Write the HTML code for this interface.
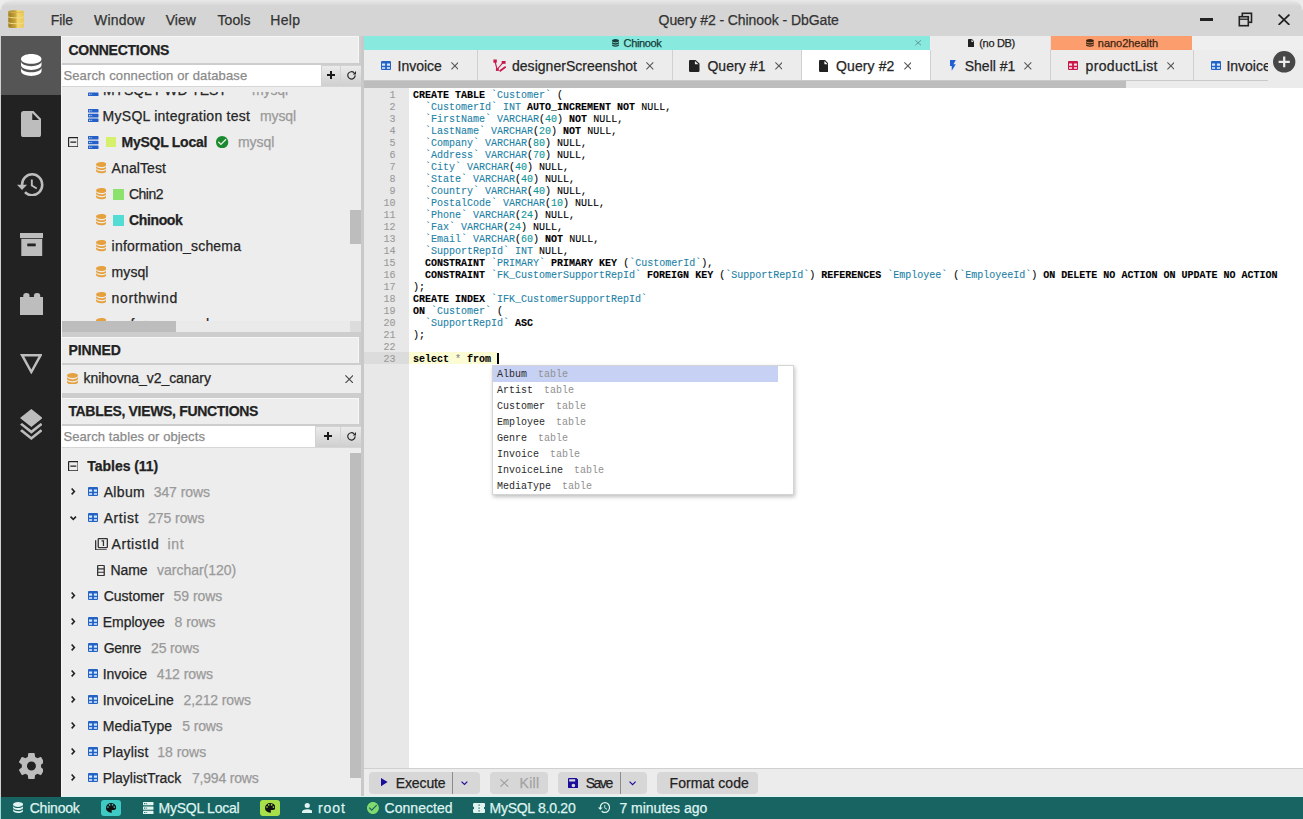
<!DOCTYPE html>
<html><head><meta charset="utf-8"><style>
html,body{margin:0;padding:0;}
body{width:1303px;height:819px;position:relative;overflow:hidden;background:#ececec;font-family:"Liberation Sans",sans-serif;}
.t{position:absolute;white-space:pre;-webkit-text-stroke:0.25px currentColor;}
.t.m{-webkit-text-stroke:0.1px currentColor;}
.r{position:absolute;}
.i{position:absolute;display:block;}
b{font-weight:bold;}
.id{color:#1d82a6;}
.n{color:#0a9696;}
.ty{color:#1d82a6;}
.op{color:#888;}
</style></head><body>
<div class="r" style="left:0px;top:0px;width:1303px;height:36px;background:#d5d5d5;"></div>
<div class="r" style="left:0px;top:0px;width:1303px;height:6px;background:linear-gradient(#e9e9e9,#d5d5d5);"></div>
<div class="r" style="left:0;top:0;width:10px;height:10px;background:radial-gradient(circle at 100% 100%, rgba(213,213,213,0) 0, rgba(213,213,213,0) 8px, #ececec 10px);"></div>
<div class="r" style="left:1293px;top:0;width:10px;height:10px;background:radial-gradient(circle at 0% 100%, rgba(213,213,213,0) 0, rgba(213,213,213,0) 8px, #ececec 10px);"></div>
<svg class="i" style="left:8px;top:9.5px" width="16.2" height="18.5" viewBox="0 0 16.2 18.5">
<defs><linearGradient id="lg" x1="0" x2="1"><stop offset="0" stop-color="#9c7d22"/><stop offset="0.45" stop-color="#c9a43a"/><stop offset="0.6" stop-color="#f3d66e"/><stop offset="1" stop-color="#e8c85a"/></linearGradient></defs>
<path d="M0.3,1.5 C0.3,-0.3 15.9,-0.3 15.9,1.5 V16.8 C15.9,18.9 0.3,18.9 0.3,16.8 Z" fill="url(#lg)"/>
<path d="M0.3,1.6 C0.3,2.8 15.9,2.8 15.9,1.6" stroke="#d9b850" stroke-width="0.8" fill="none"/>
<path d="M0.3,6.8 C0.3,8.2 15.9,8.2 15.9,6.8" stroke="#f2dc8a" stroke-width="1" fill="none"/>
<path d="M0.3,12.6 C0.3,14 15.9,14 15.9,12.6" stroke="#f2dc8a" stroke-width="1" fill="none"/>
</svg>
<div class="t" style="left:50.75px;top:13.15px;font-size:14px;line-height:14px;color:#333;letter-spacing:-0.107px;">File</div>
<div class="t" style="left:94.10px;top:13.15px;font-size:14px;line-height:14px;color:#333;letter-spacing:0.163px;">Window</div>
<div class="t" style="left:165.70px;top:13.15px;font-size:14px;line-height:14px;color:#333;letter-spacing:0.006px;">View</div>
<div class="t" style="left:217.40px;top:13.15px;font-size:14px;line-height:14px;color:#333;letter-spacing:0.104px;">Tools</div>
<div class="t" style="left:270.30px;top:13.15px;font-size:14px;line-height:14px;color:#333;letter-spacing:0.331px;">Help</div>
<div class="t" style="left:658.60px;top:13.15px;font-size:14px;line-height:14px;color:#333;letter-spacing:-0.073px;">Query #2 - Chinook - DbGate</div>
<div class="r" style="left:1200px;top:17.5px;width:13px;height:3.5px;background:#222;"></div>
<svg class="i" style="left:1238px;top:12px" width="15" height="15" viewBox="0 0 15 15">
<rect x="4.3" y="1.3" width="9.2" height="9" fill="none" stroke="#222" stroke-width="1.6"/>
<rect x="1.3" y="4.7" width="9" height="9" fill="#d5d5d5" stroke="#222" stroke-width="1.6"/>
<line x1="1" y1="7.2" x2="10.5" y2="7.2" stroke="#222" stroke-width="1.3"/>
</svg>
<svg class="i" style="left:1277.5px;top:13.5px" width="12.00" height="11.50" viewBox="0 0 10 10" preserveAspectRatio="none"><path d="M0.5,0.5L9.5,9.5M9.5,0.5L0.5,9.5" stroke="#222" stroke-width="1.5" fill="none"/></svg>
<div class="r" style="left:0px;top:36px;width:1px;height:761px;background:#d0d0d0;"></div>
<div class="r" style="left:1px;top:36px;width:60px;height:761px;background:#222222;"></div>
<div class="r" style="left:1px;top:36px;width:60px;height:59px;background:#555555;"></div>
<svg class="i" style="left:21px;top:54px;" width="20.50" height="22.00" viewBox="4 3 16 18" preserveAspectRatio="none"><path d="M12,3C7.58,3 4,4.79 4,7C4,9.21 7.58,11 12,11C16.42,11 20,9.21 20,7C20,4.79 16.42,3 12,3M4,9V12C4,14.21 7.58,16 12,16C16.42,16 20,14.21 20,12V9C20,11.21 16.42,13 12,13C7.58,13 4,11.21 4,9M4,14V17C4,19.21 7.58,21 12,21C16.42,21 20,19.21 20,17V14C20,16.21 16.42,18 12,18C7.58,18 4,16.21 4,14Z" fill="#ffffff"/></svg>
<svg class="i" style="left:21px;top:111px;" width="20.00" height="26.00" viewBox="4 2 16 20" preserveAspectRatio="none"><path d="M13,9V3.5L18.5,9M6,2C4.89,2 4,2.89 4,4V20A2,2 0 0,0 6,22H18A2,2 0 0,0 20,20V8L14,2H6Z" fill="#bdbdbd"/></svg>
<svg class="i" style="left:17px;top:172.5px;" width="26.50" height="23.50" viewBox="1 3 21 18" preserveAspectRatio="none"><path d="M13.5,8H12V13L16.28,15.54L17,14.33L13.5,12.25V8M13,3A9,9 0 0,0 4,12H1L4.96,16.03L9,12H6A7,7 0 0,1 13,5A7,7 0 0,1 20,12A7,7 0 0,1 13,19C11.07,19 9.32,18.21 8.06,16.94L6.64,18.36C8.27,20 10.5,21 13,21A9,9 0 0,0 22,12A9,9 0 0,0 13,3" fill="#bdbdbd"/></svg>
<svg class="i" style="left:19.5px;top:232.5px" width="23.5" height="23.5" viewBox="0 0 23.5 23.5">
<rect x="0" y="0" width="23.5" height="5.3" fill="#bdbdbd"/>
<rect x="1.3" y="5.3" width="20.9" height="18.2" fill="#bdbdbd"/>
<rect x="7.3" y="10.5" width="8.4" height="2.8" fill="#222"/>
<rect x="0" y="5.1" width="23.5" height="0.7" fill="#222"/>
</svg>
<svg class="i" style="left:19.5px;top:292.5px" width="23.5" height="22.5" viewBox="0 0 23.5 22.5">
<rect x="3.2" y="0" width="6.4" height="6" rx="3" fill="#bdbdbd"/>
<rect x="13.9" y="0" width="6.4" height="6" rx="3" fill="#bdbdbd"/>
<rect x="0" y="4" width="23.5" height="18.5" fill="#bdbdbd"/>
</svg>
<svg class="i" style="left:19.8px;top:353.5px;" width="22.70" height="20.50" viewBox="3 4 18 16" preserveAspectRatio="none"><path d="M6.38,6H17.63L12,16L6.38,6M3,4L12,20L21,4H3Z" fill="#bdbdbd"/></svg>
<svg class="i" style="left:19.8px;top:409px;" width="22.70" height="31.00" viewBox="3 0 18 24" preserveAspectRatio="none"><path d="M12 16.54L19.37 10.8L21 12.07L12 19.07L3 12.07L4.62 10.81L12 16.54M12 14L3 7L12 0L21 7L12 14M12 21.47L19.37 15.73L21 17L12 24L3 17L4.62 15.74L12 21.47Z" fill="#bdbdbd"/></svg>
<svg class="i" style="left:18.5px;top:753.3px;" width="24.90" height="26.10" viewBox="2.3 2 19.4 20" preserveAspectRatio="none"><path d="M12,15.5A3.5,3.5 0 0,1 8.5,12A3.5,3.5 0 0,1 12,8.5A3.5,3.5 0 0,1 15.5,12A3.5,3.5 0 0,1 12,15.5M19.43,12.97C19.47,12.65 19.5,12.33 19.5,12C19.5,11.67 19.47,11.34 19.43,11L21.54,9.37C21.73,9.22 21.78,8.95 21.66,8.73L19.66,5.27C19.54,5.05 19.27,4.96 19.05,5.05L16.56,6.05C16.04,5.66 15.5,5.32 14.87,5.07L14.5,2.42C14.46,2.18 14.25,2 14,2H10C9.75,2 9.54,2.18 9.5,2.42L9.13,5.07C8.5,5.32 7.96,5.66 7.44,6.05L4.95,5.05C4.73,4.96 4.46,5.05 4.34,5.27L2.34,8.73C2.21,8.95 2.27,9.22 2.46,9.37L4.57,11C4.53,11.34 4.5,11.67 4.5,12C4.5,12.33 4.53,12.65 4.57,12.97L2.46,14.63C2.27,14.78 2.21,15.05 2.34,15.27L4.34,18.73C4.46,18.95 4.73,19.03 4.95,18.95L7.44,17.94C7.96,18.34 8.5,18.68 9.13,18.93L9.5,21.58C9.54,21.82 9.75,22 10,22H14C14.25,22 14.46,21.82 14.5,21.58L14.87,18.93C15.5,18.67 16.04,18.34 16.56,17.94L19.05,18.95C19.27,19.03 19.54,18.95 19.66,18.73L21.66,15.27C21.78,15.05 21.73,14.78 21.54,14.63L19.43,12.97Z" fill="#bdbdbd"/></svg>
<div class="r" style="left:61px;top:36px;width:300px;height:761px;background:#ededed;"></div>
<div class="r" style="left:361px;top:36px;width:3px;height:761px;background:#c9c9c9;"></div>
<div class="r" style="left:61px;top:36px;width:300px;height:29px;background:#cdcdcd;"></div>
<div class="r" style="left:61px;top:36px;width:298px;height:26.5px;background:#ededed;border-top:1px solid #f7f7f7;border-right:1px solid #f7f7f7;border-left:1px solid #f7f7f7;box-sizing:border-box;"></div>
<div class="t" style="left:68.40px;top:43.15px;font-size:14px;line-height:14px;font-weight:bold;color:#222;letter-spacing:-0.251px;">CONNECTIONS</div>
<div class="r" style="left:61px;top:65px;width:260px;height:21px;background:#ffffff;"></div>
<div class="t" style="left:63.40px;top:68.99px;font-size:13px;line-height:13px;color:#8a8a8a;letter-spacing:0.138px;">Search connection or database</div>
<div class="r" style="left:321px;top:65px;width:40px;height:21px;background:#d2d2d2;"></div>
<div class="r" style="left:322px;top:66px;width:18px;height:20px;background:linear-gradient(#ebebeb,#cfcfcf);"></div>
<div class="r" style="left:341px;top:66px;width:19.5px;height:20px;background:linear-gradient(#ebebeb,#cfcfcf);"></div>
<div class="r" style="left:327.0px;top:74.2px;width:8.0px;height:2.0px;background:#1a1a1a;"></div>
<div class="r" style="left:330.0px;top:71.2px;width:2.0px;height:8.0px;background:#1a1a1a;"></div>
<svg class="i" style="left:346.5px;top:71.3px" width="9.5" height="8.5" viewBox="0 0 10 9"><path d="M8.6,4.6 A3.9,3.9 0 1 1 7.4,1.8" stroke="#2a2a2a" stroke-width="1.25" fill="none"/><path d="M9.6,0 V3.6 H6 Z" fill="#2a2a2a"/></svg>
<div class="r" style="left:61px;top:86px;width:300px;height:1px;background:#d6d6d6;"></div>
<div class="r" style="left:61px;top:92px;width:289px;height:229px;overflow:hidden;">
<svg class="i" style="left:27px;top:-9px;" width="10.50" height="13.00" viewBox="3 1 18 22" preserveAspectRatio="none"><path d="M4,1H20A1,1 0 0,1 21,2V6A1,1 0 0,1 20,7H4A1,1 0 0,1 3,6V2A1,1 0 0,1 4,1M4,9H20A1,1 0 0,1 21,10V14A1,1 0 0,1 20,15H4A1,1 0 0,1 3,14V10A1,1 0 0,1 4,9M4,17H20A1,1 0 0,1 21,18V22A1,1 0 0,1 20,23H4A1,1 0 0,1 3,22V18A1,1 0 0,1 4,17M9,5H10V3H9V5M9,13H10V11H9V13M9,21H10V19H9V21M5,3V5H7V3H5M5,11V13H7V11H5M5,19V21H7V19H5Z" fill="#2460c8"/></svg>
<div class="t" style="left:42.00px;top:-8.85px;font-size:14px;line-height:14px;color:#262626;letter-spacing:-0.053px;">MYSQL PWD TEST</div>
<div class="t" style="left:191.00px;top:-8.85px;font-size:14px;line-height:14px;color:#9a9a9a;letter-spacing:-0.112px;">mysql</div>
<svg class="i" style="left:27px;top:17px;" width="10.50" height="13.20" viewBox="3 1 18 22" preserveAspectRatio="none"><path d="M4,1H20A1,1 0 0,1 21,2V6A1,1 0 0,1 20,7H4A1,1 0 0,1 3,6V2A1,1 0 0,1 4,1M4,9H20A1,1 0 0,1 21,10V14A1,1 0 0,1 20,15H4A1,1 0 0,1 3,14V10A1,1 0 0,1 4,9M4,17H20A1,1 0 0,1 21,18V22A1,1 0 0,1 20,23H4A1,1 0 0,1 3,22V18A1,1 0 0,1 4,17M9,5H10V3H9V5M9,13H10V11H9V13M9,21H10V19H9V21M5,3V5H7V3H5M5,11V13H7V11H5M5,19V21H7V19H5Z" fill="#2460c8"/></svg>
<div class="t" style="left:41.60px;top:17.15px;font-size:14px;line-height:14px;color:#262626;letter-spacing:0.261px;">MySQL integration test</div>
<div class="t" style="left:199.00px;top:17.15px;font-size:14px;line-height:14px;color:#9a9a9a;letter-spacing:-0.137px;">mysql</div>
<svg class="i" style="left:6.799999999999997px;top:45px;" width="10.60" height="10.40" viewBox="3 3 18 18" preserveAspectRatio="none"><path d="M19,3H5C3.89,3 3,3.89 3,5V19A2,2 0 0,0 5,21H19A2,2 0 0,0 21,19V5C21,3.89 20.1,3 19,3M19,19H5V5H19V19M17,11H7V13H17V11Z" fill="#222"/></svg>
<svg class="i" style="left:27px;top:43.5px;" width="10.50" height="13.00" viewBox="3 1 18 22" preserveAspectRatio="none"><path d="M4,1H20A1,1 0 0,1 21,2V6A1,1 0 0,1 20,7H4A1,1 0 0,1 3,6V2A1,1 0 0,1 4,1M4,9H20A1,1 0 0,1 21,10V14A1,1 0 0,1 20,15H4A1,1 0 0,1 3,14V10A1,1 0 0,1 4,9M4,17H20A1,1 0 0,1 21,18V22A1,1 0 0,1 20,23H4A1,1 0 0,1 3,22V18A1,1 0 0,1 4,17M9,5H10V3H9V5M9,13H10V11H9V13M9,21H10V19H9V21M5,3V5H7V3H5M5,11V13H7V11H5M5,19V21H7V19H5Z" fill="#2460c8"/></svg>
<div class="r" style="left:44.6px;top:44.6px;width:10.699999999999996px;height:10.799999999999997px;background:#d6f06c;"></div>
<div class="t" style="left:60.50px;top:43.15px;font-size:14px;line-height:14px;font-weight:bold;color:#222;letter-spacing:-0.259px;">MySQL Local</div>
<svg class="i" style="left:155.4px;top:44px;" width="12.30" height="12.30" viewBox="2 2 20 20" preserveAspectRatio="none"><path d="M12 2C6.5 2 2 6.5 2 12S6.5 22 12 22 22 17.5 22 12 17.5 2 12 2M10 17L5 12L6.41 10.59L10 14.17L17.59 6.58L19 8L10 17Z" fill="#1b8a2e"/></svg>
<div class="t" style="left:177.00px;top:43.15px;font-size:14px;line-height:14px;color:#9a9a9a;letter-spacing:-0.062px;">mysql</div>
<svg class="i" style="left:34.7px;top:70.4px;" width="10.70" height="11.20" viewBox="4 3 16 18" preserveAspectRatio="none"><path d="M12,3C7.58,3 4,4.79 4,7C4,9.21 7.58,11 12,11C16.42,11 20,9.21 20,7C20,4.79 16.42,3 12,3M4,9V12C4,14.21 7.58,16 12,16C16.42,16 20,14.21 20,12V9C20,11.21 16.42,13 12,13C7.58,13 4,11.21 4,9M4,14V17C4,19.21 7.58,21 12,21C16.42,21 20,19.21 20,17V14C20,16.21 16.42,18 12,18C7.58,18 4,16.21 4,14Z" fill="#e5a13e"/></svg>
<div class="t" style="left:50.60px;top:69.15px;font-size:14px;line-height:14px;color:#262626;letter-spacing:0.099px;">AnalTest</div>
<svg class="i" style="left:34.7px;top:96.4px;" width="10.70" height="11.20" viewBox="4 3 16 18" preserveAspectRatio="none"><path d="M12,3C7.58,3 4,4.79 4,7C4,9.21 7.58,11 12,11C16.42,11 20,9.21 20,7C20,4.79 16.42,3 12,3M4,9V12C4,14.21 7.58,16 12,16C16.42,16 20,14.21 20,12V9C20,11.21 16.42,13 12,13C7.58,13 4,11.21 4,9M4,14V17C4,19.21 7.58,21 12,21C16.42,21 20,19.21 20,17V14C20,16.21 16.42,18 12,18C7.58,18 4,16.21 4,14Z" fill="#e5a13e"/></svg>
<div class="r" style="left:51.8px;top:96.5px;width:11.400000000000006px;height:11.0px;background:#8ce26c;"></div>
<div class="t" style="left:68.00px;top:95.15px;font-size:14px;line-height:14px;color:#262626;letter-spacing:-0.523px;">Chin2</div>
<svg class="i" style="left:34.7px;top:122.4px;" width="10.70" height="11.20" viewBox="4 3 16 18" preserveAspectRatio="none"><path d="M12,3C7.58,3 4,4.79 4,7C4,9.21 7.58,11 12,11C16.42,11 20,9.21 20,7C20,4.79 16.42,3 12,3M4,9V12C4,14.21 7.58,16 12,16C16.42,16 20,14.21 20,12V9C20,11.21 16.42,13 12,13C7.58,13 4,11.21 4,9M4,14V17C4,19.21 7.58,21 12,21C16.42,21 20,19.21 20,17V14C20,16.21 16.42,18 12,18C7.58,18 4,16.21 4,14Z" fill="#e5a13e"/></svg>
<div class="r" style="left:51.8px;top:122.5px;width:11.400000000000006px;height:11.0px;background:#52dcd3;"></div>
<div class="t" style="left:68.00px;top:121.15px;font-size:14px;line-height:14px;font-weight:bold;color:#222;letter-spacing:-0.368px;">Chinook</div>
<svg class="i" style="left:34.7px;top:148.4px;" width="10.70" height="11.20" viewBox="4 3 16 18" preserveAspectRatio="none"><path d="M12,3C7.58,3 4,4.79 4,7C4,9.21 7.58,11 12,11C16.42,11 20,9.21 20,7C20,4.79 16.42,3 12,3M4,9V12C4,14.21 7.58,16 12,16C16.42,16 20,14.21 20,12V9C20,11.21 16.42,13 12,13C7.58,13 4,11.21 4,9M4,14V17C4,19.21 7.58,21 12,21C16.42,21 20,19.21 20,17V14C20,16.21 16.42,18 12,18C7.58,18 4,16.21 4,14Z" fill="#e5a13e"/></svg>
<div class="t" style="left:50.60px;top:147.15px;font-size:14px;line-height:14px;color:#262626;letter-spacing:0.196px;">information_schema</div>
<svg class="i" style="left:34.7px;top:174.39999999999998px;" width="10.70" height="11.20" viewBox="4 3 16 18" preserveAspectRatio="none"><path d="M12,3C7.58,3 4,4.79 4,7C4,9.21 7.58,11 12,11C16.42,11 20,9.21 20,7C20,4.79 16.42,3 12,3M4,9V12C4,14.21 7.58,16 12,16C16.42,16 20,14.21 20,12V9C20,11.21 16.42,13 12,13C7.58,13 4,11.21 4,9M4,14V17C4,19.21 7.58,21 12,21C16.42,21 20,19.21 20,17V14C20,16.21 16.42,18 12,18C7.58,18 4,16.21 4,14Z" fill="#e5a13e"/></svg>
<div class="t" style="left:50.60px;top:173.15px;font-size:14px;line-height:14px;color:#262626;letter-spacing:0.063px;">mysql</div>
<svg class="i" style="left:34.7px;top:200.39999999999998px;" width="10.70" height="11.20" viewBox="4 3 16 18" preserveAspectRatio="none"><path d="M12,3C7.58,3 4,4.79 4,7C4,9.21 7.58,11 12,11C16.42,11 20,9.21 20,7C20,4.79 16.42,3 12,3M4,9V12C4,14.21 7.58,16 12,16C16.42,16 20,14.21 20,12V9C20,11.21 16.42,13 12,13C7.58,13 4,11.21 4,9M4,14V17C4,19.21 7.58,21 12,21C16.42,21 20,19.21 20,17V14C20,16.21 16.42,18 12,18C7.58,18 4,16.21 4,14Z" fill="#e5a13e"/></svg>
<div class="t" style="left:50.60px;top:199.15px;font-size:14px;line-height:14px;color:#262626;letter-spacing:0.610px;">northwind</div>
<svg class="i" style="left:34.7px;top:226.39999999999998px;" width="10.70" height="11.20" viewBox="4 3 16 18" preserveAspectRatio="none"><path d="M12,3C7.58,3 4,4.79 4,7C4,9.21 7.58,11 12,11C16.42,11 20,9.21 20,7C20,4.79 16.42,3 12,3M4,9V12C4,14.21 7.58,16 12,16C16.42,16 20,14.21 20,12V9C20,11.21 16.42,13 12,13C7.58,13 4,11.21 4,9M4,14V17C4,19.21 7.58,21 12,21C16.42,21 20,19.21 20,17V14C20,16.21 16.42,18 12,18C7.58,18 4,16.21 4,14Z" fill="#e5a13e"/></svg>
<div class="t" style="left:50.60px;top:225.15px;font-size:14px;line-height:14px;color:#262626;letter-spacing:-0.424px;">performance_schema</div>
</div>
<div class="r" style="left:350px;top:210px;width:11px;height:34px;background:#bdbdbd;"></div>
<div class="r" style="left:61px;top:321px;width:289px;height:11px;background:#eaeaea;"></div>
<div class="r" style="left:62px;top:321px;width:114px;height:11px;background:#bdbdbd;"></div>
<div class="r" style="left:350px;top:321px;width:11px;height:11px;background:#dcdcdc;"></div>
<div class="r" style="left:61px;top:332px;width:300px;height:5px;background:#cdcdcd;"></div>
<div class="r" style="left:61px;top:337px;width:300px;height:28px;background:#cdcdcd;"></div>
<div class="r" style="left:61px;top:337px;width:298px;height:25.5px;background:#ededed;border-top:1px solid #f7f7f7;border-right:1px solid #f7f7f7;border-left:1px solid #f7f7f7;box-sizing:border-box;"></div>
<div class="t" style="left:68.40px;top:342.65px;font-size:14px;line-height:14px;font-weight:bold;color:#222;letter-spacing:-0.097px;">PINNED</div>
<svg class="i" style="left:67px;top:372.5px;" width="11.00" height="11.50" viewBox="4 3 16 18" preserveAspectRatio="none"><path d="M12,3C7.58,3 4,4.79 4,7C4,9.21 7.58,11 12,11C16.42,11 20,9.21 20,7C20,4.79 16.42,3 12,3M4,9V12C4,14.21 7.58,16 12,16C16.42,16 20,14.21 20,12V9C20,11.21 16.42,13 12,13C7.58,13 4,11.21 4,9M4,14V17C4,19.21 7.58,21 12,21C16.42,21 20,19.21 20,17V14C20,16.21 16.42,18 12,18C7.58,18 4,16.21 4,14Z" fill="#e5a13e"/></svg>
<div class="t" style="left:83.50px;top:371.15px;font-size:14px;line-height:14px;color:#262626;letter-spacing:-0.060px;">knihovna_v2_canary</div>
<svg class="i" style="left:344.5px;top:374.5px" width="8.50" height="8.50" viewBox="0 0 10 10" preserveAspectRatio="none"><path d="M0.5,0.5L9.5,9.5M9.5,0.5L0.5,9.5" stroke="#444" stroke-width="1.3" fill="none"/></svg>
<div class="r" style="left:61px;top:393px;width:300px;height:5px;background:#cdcdcd;"></div>
<div class="r" style="left:61px;top:398px;width:300px;height:28px;background:#cdcdcd;"></div>
<div class="r" style="left:61px;top:398px;width:298px;height:25.5px;background:#ededed;border-top:1px solid #f7f7f7;border-right:1px solid #f7f7f7;border-left:1px solid #f7f7f7;box-sizing:border-box;"></div>
<div class="t" style="left:68.40px;top:403.65px;font-size:14px;line-height:14px;font-weight:bold;color:#222;letter-spacing:-0.320px;">TABLES, VIEWS, FUNCTIONS</div>
<div class="r" style="left:61px;top:426px;width:254px;height:21px;background:#ffffff;"></div>
<div class="t" style="left:63.40px;top:429.99px;font-size:13px;line-height:13px;color:#8a8a8a;letter-spacing:0.089px;">Search tables or objects</div>
<div class="r" style="left:315px;top:426px;width:46px;height:21px;background:#d2d2d2;"></div>
<div class="r" style="left:316px;top:427px;width:24px;height:20px;background:linear-gradient(#ebebeb,#cfcfcf);"></div>
<div class="r" style="left:341px;top:427px;width:19.5px;height:20px;background:linear-gradient(#ebebeb,#cfcfcf);"></div>
<div class="r" style="left:324.0px;top:435.2px;width:8.0px;height:2.0px;background:#1a1a1a;"></div>
<div class="r" style="left:327.0px;top:432.2px;width:2.0px;height:8.0px;background:#1a1a1a;"></div>
<svg class="i" style="left:346.5px;top:432.3px" width="9.5" height="8.5" viewBox="0 0 10 9"><path d="M8.6,4.6 A3.9,3.9 0 1 1 7.4,1.8" stroke="#2a2a2a" stroke-width="1.25" fill="none"/><path d="M9.6,0 V3.6 H6 Z" fill="#2a2a2a"/></svg>
<div class="r" style="left:61px;top:447px;width:300px;height:1px;background:#d6d6d6;"></div>
<svg class="i" style="left:67.6px;top:461px;" width="10.70" height="10.30" viewBox="3 3 18 18" preserveAspectRatio="none"><path d="M19,3H5C3.89,3 3,3.89 3,5V19A2,2 0 0,0 5,21H19A2,2 0 0,0 21,19V5C21,3.89 20.1,3 19,3M19,19H5V5H19V19M17,11H7V13H17V11Z" fill="#222"/></svg>
<div class="t" style="left:87.30px;top:459.15px;font-size:14px;line-height:14px;font-weight:bold;color:#222;letter-spacing:-0.036px;">Tables (11)</div>
<svg class="i" style="left:71px;top:488px;overflow:visible" width="4.00" height="6.90" viewBox="0 0 5 10" preserveAspectRatio="none"><path d="M0.8,0.8L4.2,5L0.8,9.2" stroke="#222" stroke-width="1.6" fill="none" vector-effect="non-scaling-stroke"/></svg>
<svg class="i" style="left:88.1px;top:486.9px" width="10" height="9" viewBox="0 0 10 9" preserveAspectRatio="none"><rect x="0" y="0" width="10" height="9" rx="1" fill="#2462c4"/><rect x="1" y="2.5" width="3.1" height="2.2" fill="#d6ecff"/><rect x="5.9" y="2.5" width="3.1" height="2.2" fill="#d6ecff"/><rect x="1" y="6.2" width="3.1" height="1.6" fill="#d6ecff"/><rect x="5.9" y="6.2" width="3.1" height="1.6" fill="#d6ecff"/></svg>
<div class="t" style="left:103.70px;top:485.15px;font-size:14px;line-height:14px;color:#262626;letter-spacing:0.345px;">Album</div>
<div class="t" style="left:153.70px;top:485.15px;font-size:14px;line-height:14px;color:#9a9a9a;letter-spacing:-0.072px;">347 rows</div>
<svg class="i" style="left:69.8px;top:516.1px;overflow:visible" width="6.50" height="3.90" viewBox="0 0 10 5" preserveAspectRatio="none"><path d="M0.8,0.8L5,4.2L9.2,0.8" stroke="#222" stroke-width="1.6" fill="none" vector-effect="non-scaling-stroke"/></svg>
<svg class="i" style="left:88.1px;top:512.9px" width="10" height="9" viewBox="0 0 10 9" preserveAspectRatio="none"><rect x="0" y="0" width="10" height="9" rx="1" fill="#2462c4"/><rect x="1" y="2.5" width="3.1" height="2.2" fill="#d6ecff"/><rect x="5.9" y="2.5" width="3.1" height="2.2" fill="#d6ecff"/><rect x="1" y="6.2" width="3.1" height="1.6" fill="#d6ecff"/><rect x="5.9" y="6.2" width="3.1" height="1.6" fill="#d6ecff"/></svg>
<div class="t" style="left:103.70px;top:511.15px;font-size:14px;line-height:14px;color:#262626;letter-spacing:0.580px;">Artist</div>
<div class="t" style="left:148.10px;top:511.15px;font-size:14px;line-height:14px;color:#9a9a9a;letter-spacing:-0.072px;">275 rows</div>
<svg class="i" style="left:94.6px;top:537.5px;" width="13.00" height="12.50" viewBox="2 1 20 22" preserveAspectRatio="none"><path d="M14,15H16V5H12V7H14M20,17H8V3H20M20,1H8A2,2 0 0,0 6,3V17A2,2 0 0,0 8,19H20A2,2 0 0,0 22,17V3A2,2 0 0,0 20,1M4,5H2V21A2,2 0 0,0 4,23H20V21H4V5Z" fill="#333"/></svg>
<div class="t" style="left:111.60px;top:537.15px;font-size:14px;line-height:14px;color:#262626;letter-spacing:0.532px;">ArtistId</div>
<div class="t" style="left:167.60px;top:537.15px;font-size:14px;line-height:14px;color:#9a9a9a;letter-spacing:0.652px;">int</div>
<svg class="i" style="left:97.3px;top:564.5px;" width="7.90" height="11.10" viewBox="6 2 12 20" preserveAspectRatio="none"><path d="M8,2H16A2,2 0 0,1 18,4V20A2,2 0 0,1 16,22H8A2,2 0 0,1 6,20V4A2,2 0 0,1 8,2M8,10V14H16V10H8M8,16V20H16V16H8M8,4V8H16V4H8Z" fill="#333"/></svg>
<div class="t" style="left:110.60px;top:563.15px;font-size:14px;line-height:14px;color:#262626;letter-spacing:-0.120px;">Name</div>
<div class="t" style="left:157.10px;top:563.15px;font-size:14px;line-height:14px;color:#9a9a9a;letter-spacing:-0.037px;">varchar(120)</div>
<svg class="i" style="left:71px;top:592px;overflow:visible" width="4.00" height="6.90" viewBox="0 0 5 10" preserveAspectRatio="none"><path d="M0.8,0.8L4.2,5L0.8,9.2" stroke="#222" stroke-width="1.6" fill="none" vector-effect="non-scaling-stroke"/></svg>
<svg class="i" style="left:88.1px;top:590.9px" width="10" height="9" viewBox="0 0 10 9" preserveAspectRatio="none"><rect x="0" y="0" width="10" height="9" rx="1" fill="#2462c4"/><rect x="1" y="2.5" width="3.1" height="2.2" fill="#d6ecff"/><rect x="5.9" y="2.5" width="3.1" height="2.2" fill="#d6ecff"/><rect x="1" y="6.2" width="3.1" height="1.6" fill="#d6ecff"/><rect x="5.9" y="6.2" width="3.1" height="1.6" fill="#d6ecff"/></svg>
<div class="t" style="left:103.70px;top:589.15px;font-size:14px;line-height:14px;color:#262626;letter-spacing:-0.017px;">Customer</div>
<div class="t" style="left:173.60px;top:589.15px;font-size:14px;line-height:14px;color:#9a9a9a;letter-spacing:-0.053px;">59 rows</div>
<svg class="i" style="left:71px;top:618px;overflow:visible" width="4.00" height="6.90" viewBox="0 0 5 10" preserveAspectRatio="none"><path d="M0.8,0.8L4.2,5L0.8,9.2" stroke="#222" stroke-width="1.6" fill="none" vector-effect="non-scaling-stroke"/></svg>
<svg class="i" style="left:88.1px;top:616.9px" width="10" height="9" viewBox="0 0 10 9" preserveAspectRatio="none"><rect x="0" y="0" width="10" height="9" rx="1" fill="#2462c4"/><rect x="1" y="2.5" width="3.1" height="2.2" fill="#d6ecff"/><rect x="5.9" y="2.5" width="3.1" height="2.2" fill="#d6ecff"/><rect x="1" y="6.2" width="3.1" height="1.6" fill="#d6ecff"/><rect x="5.9" y="6.2" width="3.1" height="1.6" fill="#d6ecff"/></svg>
<div class="t" style="left:102.70px;top:615.15px;font-size:14px;line-height:14px;color:#262626;letter-spacing:-0.010px;">Employee</div>
<div class="t" style="left:174.60px;top:615.15px;font-size:14px;line-height:14px;color:#9a9a9a;letter-spacing:-0.047px;">8 rows</div>
<svg class="i" style="left:71px;top:644px;overflow:visible" width="4.00" height="6.90" viewBox="0 0 5 10" preserveAspectRatio="none"><path d="M0.8,0.8L4.2,5L0.8,9.2" stroke="#222" stroke-width="1.6" fill="none" vector-effect="non-scaling-stroke"/></svg>
<svg class="i" style="left:88.1px;top:642.9px" width="10" height="9" viewBox="0 0 10 9" preserveAspectRatio="none"><rect x="0" y="0" width="10" height="9" rx="1" fill="#2462c4"/><rect x="1" y="2.5" width="3.1" height="2.2" fill="#d6ecff"/><rect x="5.9" y="2.5" width="3.1" height="2.2" fill="#d6ecff"/><rect x="1" y="6.2" width="3.1" height="1.6" fill="#d6ecff"/><rect x="5.9" y="6.2" width="3.1" height="1.6" fill="#d6ecff"/></svg>
<div class="t" style="left:103.70px;top:641.15px;font-size:14px;line-height:14px;color:#262626;letter-spacing:-0.331px;">Genre</div>
<div class="t" style="left:151.00px;top:641.15px;font-size:14px;line-height:14px;color:#9a9a9a;letter-spacing:-0.137px;">25 rows</div>
<svg class="i" style="left:71px;top:670px;overflow:visible" width="4.00" height="6.90" viewBox="0 0 5 10" preserveAspectRatio="none"><path d="M0.8,0.8L4.2,5L0.8,9.2" stroke="#222" stroke-width="1.6" fill="none" vector-effect="non-scaling-stroke"/></svg>
<svg class="i" style="left:88.1px;top:668.9px" width="10" height="9" viewBox="0 0 10 9" preserveAspectRatio="none"><rect x="0" y="0" width="10" height="9" rx="1" fill="#2462c4"/><rect x="1" y="2.5" width="3.1" height="2.2" fill="#d6ecff"/><rect x="5.9" y="2.5" width="3.1" height="2.2" fill="#d6ecff"/><rect x="1" y="6.2" width="3.1" height="1.6" fill="#d6ecff"/><rect x="5.9" y="6.2" width="3.1" height="1.6" fill="#d6ecff"/></svg>
<div class="t" style="left:102.70px;top:667.15px;font-size:14px;line-height:14px;color:#262626;letter-spacing:-0.012px;">Invoice</div>
<div class="t" style="left:156.70px;top:667.15px;font-size:14px;line-height:14px;color:#9a9a9a;letter-spacing:-0.072px;">412 rows</div>
<svg class="i" style="left:71px;top:696px;overflow:visible" width="4.00" height="6.90" viewBox="0 0 5 10" preserveAspectRatio="none"><path d="M0.8,0.8L4.2,5L0.8,9.2" stroke="#222" stroke-width="1.6" fill="none" vector-effect="non-scaling-stroke"/></svg>
<svg class="i" style="left:88.1px;top:694.9px" width="10" height="9" viewBox="0 0 10 9" preserveAspectRatio="none"><rect x="0" y="0" width="10" height="9" rx="1" fill="#2462c4"/><rect x="1" y="2.5" width="3.1" height="2.2" fill="#d6ecff"/><rect x="5.9" y="2.5" width="3.1" height="2.2" fill="#d6ecff"/><rect x="1" y="6.2" width="3.1" height="1.6" fill="#d6ecff"/><rect x="5.9" y="6.2" width="3.1" height="1.6" fill="#d6ecff"/></svg>
<div class="t" style="left:102.70px;top:693.15px;font-size:14px;line-height:14px;color:#262626;letter-spacing:0.036px;">InvoiceLine</div>
<div class="t" style="left:183.60px;top:693.15px;font-size:14px;line-height:14px;color:#9a9a9a;letter-spacing:-0.120px;">2,212 rows</div>
<svg class="i" style="left:71px;top:722px;overflow:visible" width="4.00" height="6.90" viewBox="0 0 5 10" preserveAspectRatio="none"><path d="M0.8,0.8L4.2,5L0.8,9.2" stroke="#222" stroke-width="1.6" fill="none" vector-effect="non-scaling-stroke"/></svg>
<svg class="i" style="left:88.1px;top:720.9px" width="10" height="9" viewBox="0 0 10 9" preserveAspectRatio="none"><rect x="0" y="0" width="10" height="9" rx="1" fill="#2462c4"/><rect x="1" y="2.5" width="3.1" height="2.2" fill="#d6ecff"/><rect x="5.9" y="2.5" width="3.1" height="2.2" fill="#d6ecff"/><rect x="1" y="6.2" width="3.1" height="1.6" fill="#d6ecff"/><rect x="5.9" y="6.2" width="3.1" height="1.6" fill="#d6ecff"/></svg>
<div class="t" style="left:102.70px;top:719.15px;font-size:14px;line-height:14px;color:#262626;letter-spacing:0.113px;">MediaType</div>
<div class="t" style="left:182.30px;top:719.15px;font-size:14px;line-height:14px;color:#9a9a9a;letter-spacing:-0.147px;">5 rows</div>
<svg class="i" style="left:71px;top:748px;overflow:visible" width="4.00" height="6.90" viewBox="0 0 5 10" preserveAspectRatio="none"><path d="M0.8,0.8L4.2,5L0.8,9.2" stroke="#222" stroke-width="1.6" fill="none" vector-effect="non-scaling-stroke"/></svg>
<svg class="i" style="left:88.1px;top:746.9px" width="10" height="9" viewBox="0 0 10 9" preserveAspectRatio="none"><rect x="0" y="0" width="10" height="9" rx="1" fill="#2462c4"/><rect x="1" y="2.5" width="3.1" height="2.2" fill="#d6ecff"/><rect x="5.9" y="2.5" width="3.1" height="2.2" fill="#d6ecff"/><rect x="1" y="6.2" width="3.1" height="1.6" fill="#d6ecff"/><rect x="5.9" y="6.2" width="3.1" height="1.6" fill="#d6ecff"/></svg>
<div class="t" style="left:102.70px;top:745.15px;font-size:14px;line-height:14px;color:#262626;letter-spacing:0.192px;">Playlist</div>
<div class="t" style="left:157.20px;top:745.15px;font-size:14px;line-height:14px;color:#9a9a9a;letter-spacing:-0.003px;">18 rows</div>
<svg class="i" style="left:71px;top:774px;overflow:visible" width="4.00" height="6.90" viewBox="0 0 5 10" preserveAspectRatio="none"><path d="M0.8,0.8L4.2,5L0.8,9.2" stroke="#222" stroke-width="1.6" fill="none" vector-effect="non-scaling-stroke"/></svg>
<svg class="i" style="left:88.1px;top:772.9px" width="10" height="9" viewBox="0 0 10 9" preserveAspectRatio="none"><rect x="0" y="0" width="10" height="9" rx="1" fill="#2462c4"/><rect x="1" y="2.5" width="3.1" height="2.2" fill="#d6ecff"/><rect x="5.9" y="2.5" width="3.1" height="2.2" fill="#d6ecff"/><rect x="1" y="6.2" width="3.1" height="1.6" fill="#d6ecff"/><rect x="5.9" y="6.2" width="3.1" height="1.6" fill="#d6ecff"/></svg>
<div class="t" style="left:102.70px;top:771.15px;font-size:14px;line-height:14px;color:#262626;letter-spacing:-0.019px;">PlaylistTrack</div>
<div class="t" style="left:192.00px;top:771.15px;font-size:14px;line-height:14px;color:#9a9a9a;letter-spacing:-0.198px;">7,994 rows</div>
<div class="r" style="left:350px;top:453px;width:11px;height:325px;background:#bdbdbd;"></div>
<div class="r" style="left:61px;top:36px;width:1px;height:760px;background:#f7f7f7;"></div>
<div class="r" style="left:364px;top:36px;width:939px;height:761px;background:#ffffff;"></div>
<div class="r" style="left:364px;top:36px;width:939px;height:14px;background:#efefef;"></div>
<div class="r" style="left:364px;top:36px;width:566px;height:14px;background:#88e9de;"></div>
<div class="r" style="left:931px;top:36px;width:119px;height:14px;background:#ececec;"></div>
<div class="r" style="left:1050px;top:36px;width:142px;height:14px;background:#fc9d6d;"></div>
<div class="r" style="left:1192px;top:36px;width:111px;height:14px;background:#efefef;"></div>
<svg class="i" style="left:612px;top:39.2px;" width="7.00" height="7.80" viewBox="4 3 16 18" preserveAspectRatio="none"><path d="M12,3C7.58,3 4,4.79 4,7C4,9.21 7.58,11 12,11C16.42,11 20,9.21 20,7C20,4.79 16.42,3 12,3M4,9V12C4,14.21 7.58,16 12,16C16.42,16 20,14.21 20,12V9C20,11.21 16.42,13 12,13C7.58,13 4,11.21 4,9M4,14V17C4,19.21 7.58,21 12,21C16.42,21 20,19.21 20,17V14C20,16.21 16.42,18 12,18C7.58,18 4,16.21 4,14Z" fill="#173f3c"/></svg>
<div class="t" style="left:623.60px;top:37.69px;font-size:11px;line-height:11px;color:#163c39;letter-spacing:-0.360px;">Chinook</div>
<svg class="i" style="left:915px;top:40.3px" width="6.30" height="5.50" viewBox="0 0 10 10" preserveAspectRatio="none"><path d="M0.5,0.5L9.5,9.5M9.5,0.5L0.5,9.5" stroke="#4f7a77" stroke-width="1.2" fill="none"/></svg>
<svg class="i" style="left:968.3px;top:39.2px;" width="6.20" height="8.30" viewBox="4 2 16 20" preserveAspectRatio="none"><path d="M13,9V3.5L18.5,9M6,2C4.89,2 4,2.89 4,4V20A2,2 0 0,0 6,22H18A2,2 0 0,0 20,20V8L14,2H6Z" fill="#222"/></svg>
<div class="t" style="left:979.30px;top:37.69px;font-size:11px;line-height:11px;color:#222;letter-spacing:-0.339px;">(no DB)</div>
<svg class="i" style="left:1085.8px;top:39.2px;" width="7.90" height="7.80" viewBox="4 3 16 18" preserveAspectRatio="none"><path d="M12,3C7.58,3 4,4.79 4,7C4,9.21 7.58,11 12,11C16.42,11 20,9.21 20,7C20,4.79 16.42,3 12,3M4,9V12C4,14.21 7.58,16 12,16C16.42,16 20,14.21 20,12V9C20,11.21 16.42,13 12,13C7.58,13 4,11.21 4,9M4,14V17C4,19.21 7.58,21 12,21C16.42,21 20,19.21 20,17V14C20,16.21 16.42,18 12,18C7.58,18 4,16.21 4,14Z" fill="#3b2412"/></svg>
<div class="t" style="left:1097.80px;top:37.69px;font-size:11px;line-height:11px;color:#3b2412;letter-spacing:-0.034px;">nano2health</div>
<div class="r" style="left:364px;top:50px;width:939px;height:31px;background:#ececec;"></div>
<div class="r" style="left:364px;top:80px;width:904px;height:1px;background:#c9c9c9;"></div>
<div class="r" style="left:364px;top:50px;width:904px;height:30px;overflow:hidden;">
<div class="r" style="left:0px;top:0px;width:113px;height:30px;background:#ececec;"></div>
<svg class="i" style="left:16.69999999999999px;top:11.1px" width="10" height="9" viewBox="0 0 10 9" preserveAspectRatio="none"><rect x="0" y="0" width="10" height="9" rx="1" fill="#2462c4"/><rect x="1" y="2.5" width="3.1" height="2.2" fill="#d6ecff"/><rect x="5.9" y="2.5" width="3.1" height="2.2" fill="#d6ecff"/><rect x="1" y="6.2" width="3.1" height="1.6" fill="#d6ecff"/><rect x="5.9" y="6.2" width="3.1" height="1.6" fill="#d6ecff"/></svg>
<div class="t" style="left:33.50px;top:8.85px;font-size:14px;line-height:14px;color:#262626;letter-spacing:-0.012px;">Invoice</div>
<svg class="i" style="left:86.60000000000002px;top:11.9px" width="7.70" height="7.70" viewBox="0 0 10 10" preserveAspectRatio="none"><path d="M0.5,0.5L9.5,9.5M9.5,0.5L0.5,9.5" stroke="#555" stroke-width="1.35" fill="none"/></svg>
<div class="r" style="left:114px;top:0px;width:194px;height:30px;background:#ececec;"></div>
<svg class="i" style="left:129px;top:9px" width="14" height="13" viewBox="0 0 14 13">
<path d="M1.9,2 L4.1,10.5 M4.1,10.5 L10.2,3.3" stroke="#c8174a" stroke-width="1.1" fill="none"/>
<rect x="0.4" y="0.5" width="3.4" height="3.2" fill="#c8174a"/>
<rect x="8.7" y="2" width="3.9" height="2.8" fill="#c8174a"/>
<rect x="2.9" y="9.4" width="2.9" height="2.5" fill="#c8174a"/>
<path d="M6.6,12.3 L12.7,7.8" stroke="#c8174a" stroke-width="1.7"/>
</svg>
<div class="t" style="left:148.00px;top:8.85px;font-size:14px;line-height:14px;color:#262626;letter-spacing:0.022px;">designerScreenshot</div>
<svg class="i" style="left:282px;top:11.9px" width="7.70" height="7.70" viewBox="0 0 10 10" preserveAspectRatio="none"><path d="M0.5,0.5L9.5,9.5M9.5,0.5L0.5,9.5" stroke="#555" stroke-width="1.35" fill="none"/></svg>
<div class="r" style="left:309px;top:0px;width:128px;height:30px;background:#ececec;"></div>
<svg class="i" style="left:325px;top:9.5px;" width="10.50" height="12.00" viewBox="4 2 16 20" preserveAspectRatio="none"><path d="M13,9V3.5L18.5,9M6,2C4.89,2 4,2.89 4,4V20A2,2 0 0,0 6,22H18A2,2 0 0,0 20,20V8L14,2H6Z" fill="#222"/></svg>
<div class="t" style="left:343.40px;top:8.85px;font-size:14px;line-height:14px;color:#262626;letter-spacing:0.071px;">Query #1</div>
<svg class="i" style="left:410.70000000000005px;top:11.9px" width="7.70" height="7.70" viewBox="0 0 10 10" preserveAspectRatio="none"><path d="M0.5,0.5L9.5,9.5M9.5,0.5L0.5,9.5" stroke="#555" stroke-width="1.35" fill="none"/></svg>
<div class="r" style="left:437px;top:0px;width:129px;height:30px;background:#ffffff;"></div>
<svg class="i" style="left:454.70000000000005px;top:9.5px;" width="9.60" height="12.00" viewBox="4 2 16 20" preserveAspectRatio="none"><path d="M13,9V3.5L18.5,9M6,2C4.89,2 4,2.89 4,4V20A2,2 0 0,0 6,22H18A2,2 0 0,0 20,20V8L14,2H6Z" fill="#222"/></svg>
<div class="t" style="left:472.00px;top:8.85px;font-size:14px;line-height:14px;color:#262626;letter-spacing:0.114px;">Query #2</div>
<svg class="i" style="left:539.6px;top:11.9px" width="7.70" height="7.70" viewBox="0 0 10 10" preserveAspectRatio="none"><path d="M0.5,0.5L9.5,9.5M9.5,0.5L0.5,9.5" stroke="#555" stroke-width="1.35" fill="none"/></svg>
<div class="r" style="left:567px;top:0px;width:119px;height:30px;background:#ececec;"></div>
<svg class="i" style="left:585.8px;top:9.9px;" width="5.80" height="10.70" viewBox="7 2 10 20" preserveAspectRatio="none"><path d="M7,2V13H10V22L17,10H13L17,2H7Z" fill="#1f5fd6"/></svg>
<div class="t" style="left:600.70px;top:8.85px;font-size:14px;line-height:14px;color:#262626;letter-spacing:0.013px;">Shell #1</div>
<svg class="i" style="left:660.4000000000001px;top:11.9px" width="7.70" height="7.70" viewBox="0 0 10 10" preserveAspectRatio="none"><path d="M0.5,0.5L9.5,9.5M9.5,0.5L0.5,9.5" stroke="#555" stroke-width="1.35" fill="none"/></svg>
<div class="r" style="left:686px;top:0px;width:143px;height:30px;background:#ececec;"></div>
<svg class="i" style="left:704px;top:11.1px" width="10" height="9" viewBox="0 0 10 9" preserveAspectRatio="none"><rect x="0" y="0" width="10" height="9" rx="1" fill="#c8174a"/><rect x="1" y="2.5" width="3.1" height="2.2" fill="#ffe0e8"/><rect x="5.9" y="2.5" width="3.1" height="2.2" fill="#ffe0e8"/><rect x="1" y="6.2" width="3.1" height="1.6" fill="#ffe0e8"/><rect x="5.9" y="6.2" width="3.1" height="1.6" fill="#ffe0e8"/></svg>
<div class="t" style="left:721.60px;top:8.85px;font-size:14px;line-height:14px;color:#262626;letter-spacing:0.341px;">productList</div>
<svg class="i" style="left:802.5px;top:11.9px" width="7.70" height="7.70" viewBox="0 0 10 10" preserveAspectRatio="none"><path d="M0.5,0.5L9.5,9.5M9.5,0.5L0.5,9.5" stroke="#555" stroke-width="1.35" fill="none"/></svg>
<div class="r" style="left:829px;top:0px;width:207px;height:30px;background:#ececec;"></div>
<svg class="i" style="left:846.5999999999999px;top:11.1px" width="10" height="9" viewBox="0 0 10 9" preserveAspectRatio="none"><rect x="0" y="0" width="10" height="9" rx="1" fill="#2462c4"/><rect x="1" y="2.5" width="3.1" height="2.2" fill="#d6ecff"/><rect x="5.9" y="2.5" width="3.1" height="2.2" fill="#d6ecff"/><rect x="1" y="6.2" width="3.1" height="1.6" fill="#d6ecff"/><rect x="5.9" y="6.2" width="3.1" height="1.6" fill="#d6ecff"/></svg>
<div class="t" style="left:862.40px;top:8.85px;font-size:14px;line-height:14px;color:#262626;letter-spacing:-0.012px;">Invoice</div>
<div class="r" style="left:113px;top:0px;width:1px;height:30px;background:#d0d0d0;"></div>
<div class="r" style="left:308px;top:0px;width:1px;height:30px;background:#d0d0d0;"></div>
<div class="r" style="left:437px;top:0px;width:1px;height:30px;background:#d0d0d0;"></div>
<div class="r" style="left:566px;top:0px;width:1px;height:30px;background:#d0d0d0;"></div>
<div class="r" style="left:686px;top:0px;width:1px;height:30px;background:#d0d0d0;"></div>
<div class="r" style="left:829px;top:0px;width:1px;height:30px;background:#d0d0d0;"></div>
</div>
<div class="r" style="left:1050px;top:36px;width:1px;height:14px;background:#e0e0e0;"></div>
<svg class="i" style="left:1273.2px;top:51.1px;" width="22.40" height="21.60" viewBox="2 2 20 20" preserveAspectRatio="none"><path d="M17,13H13V17H11V13H7V11H11V7H13V11H17M12,2A10,10 0 0,0 2,12A10,10 0 0,0 12,22A10,10 0 0,0 22,12A10,10 0 0,0 12,2Z" fill="#474747"/></svg>
<div class="r" style="left:364px;top:81px;width:939px;height:7px;background:#ebebeb;"></div>
<div class="r" style="left:364px;top:81px;width:762px;height:7px;background:#bdbdbd;"></div>
<div class="r" style="left:364px;top:88px;width:45px;height:680px;background:#e8e8e8;"></div>
<div class="r" style="left:364px;top:352px;width:45px;height:12px;background:#dcdcdc;"></div>
<div class="r" style="left:409px;top:352px;width:88px;height:12px;background:#fcfcd4;"></div>
<div class="t m" style="left:413.00px;top:90.84px;font-size:10px;line-height:10px;color:#000;font-family:'Liberation Mono', monospace;"><b>CREATE</b> <b>TABLE</b> <span class="id">`Customer`</span> (</div>
<div class="t m" style="left:389.50px;top:90.84px;font-size:10px;line-height:10px;color:#9a9a9a;font-family:'Liberation Mono', monospace;">1</div>
<div class="t m" style="left:413.00px;top:102.84px;font-size:10px;line-height:10px;color:#000;font-family:'Liberation Mono', monospace;">  <span class="id">`CustomerId`</span> <span class="ty">INT</span> <b>AUTO_INCREMENT</b> <b>NOT</b> NULL,</div>
<div class="t m" style="left:389.50px;top:102.84px;font-size:10px;line-height:10px;color:#9a9a9a;font-family:'Liberation Mono', monospace;">2</div>
<div class="t m" style="left:413.00px;top:114.84px;font-size:10px;line-height:10px;color:#000;font-family:'Liberation Mono', monospace;">  <span class="id">`FirstName`</span> <span class="ty">VARCHAR</span>(<span class="n">40</span>) <b>NOT</b> NULL,</div>
<div class="t m" style="left:389.50px;top:114.84px;font-size:10px;line-height:10px;color:#9a9a9a;font-family:'Liberation Mono', monospace;">3</div>
<div class="t m" style="left:413.00px;top:126.84px;font-size:10px;line-height:10px;color:#000;font-family:'Liberation Mono', monospace;">  <span class="id">`LastName`</span> <span class="ty">VARCHAR</span>(<span class="n">20</span>) <b>NOT</b> NULL,</div>
<div class="t m" style="left:389.50px;top:126.84px;font-size:10px;line-height:10px;color:#9a9a9a;font-family:'Liberation Mono', monospace;">4</div>
<div class="t m" style="left:413.00px;top:138.84px;font-size:10px;line-height:10px;color:#000;font-family:'Liberation Mono', monospace;">  <span class="id">`Company`</span> <span class="ty">VARCHAR</span>(<span class="n">80</span>) NULL,</div>
<div class="t m" style="left:389.50px;top:138.84px;font-size:10px;line-height:10px;color:#9a9a9a;font-family:'Liberation Mono', monospace;">5</div>
<div class="t m" style="left:413.00px;top:150.84px;font-size:10px;line-height:10px;color:#000;font-family:'Liberation Mono', monospace;">  <span class="id">`Address`</span> <span class="ty">VARCHAR</span>(<span class="n">70</span>) NULL,</div>
<div class="t m" style="left:389.50px;top:150.84px;font-size:10px;line-height:10px;color:#9a9a9a;font-family:'Liberation Mono', monospace;">6</div>
<div class="t m" style="left:413.00px;top:162.84px;font-size:10px;line-height:10px;color:#000;font-family:'Liberation Mono', monospace;">  <span class="id">`City`</span> <span class="ty">VARCHAR</span>(<span class="n">40</span>) NULL,</div>
<div class="t m" style="left:389.50px;top:162.84px;font-size:10px;line-height:10px;color:#9a9a9a;font-family:'Liberation Mono', monospace;">7</div>
<div class="t m" style="left:413.00px;top:174.84px;font-size:10px;line-height:10px;color:#000;font-family:'Liberation Mono', monospace;">  <span class="id">`State`</span> <span class="ty">VARCHAR</span>(<span class="n">40</span>) NULL,</div>
<div class="t m" style="left:389.50px;top:174.84px;font-size:10px;line-height:10px;color:#9a9a9a;font-family:'Liberation Mono', monospace;">8</div>
<div class="t m" style="left:413.00px;top:186.84px;font-size:10px;line-height:10px;color:#000;font-family:'Liberation Mono', monospace;">  <span class="id">`Country`</span> <span class="ty">VARCHAR</span>(<span class="n">40</span>) NULL,</div>
<div class="t m" style="left:389.50px;top:186.84px;font-size:10px;line-height:10px;color:#9a9a9a;font-family:'Liberation Mono', monospace;">9</div>
<div class="t m" style="left:413.00px;top:198.84px;font-size:10px;line-height:10px;color:#000;font-family:'Liberation Mono', monospace;">  <span class="id">`PostalCode`</span> <span class="ty">VARCHAR</span>(<span class="n">10</span>) NULL,</div>
<div class="t m" style="left:383.50px;top:198.84px;font-size:10px;line-height:10px;color:#9a9a9a;font-family:'Liberation Mono', monospace;">10</div>
<div class="t m" style="left:413.00px;top:210.84px;font-size:10px;line-height:10px;color:#000;font-family:'Liberation Mono', monospace;">  <span class="id">`Phone`</span> <span class="ty">VARCHAR</span>(<span class="n">24</span>) NULL,</div>
<div class="t m" style="left:383.50px;top:210.84px;font-size:10px;line-height:10px;color:#9a9a9a;font-family:'Liberation Mono', monospace;">11</div>
<div class="t m" style="left:413.00px;top:222.84px;font-size:10px;line-height:10px;color:#000;font-family:'Liberation Mono', monospace;">  <span class="id">`Fax`</span> <span class="ty">VARCHAR</span>(<span class="n">24</span>) NULL,</div>
<div class="t m" style="left:383.50px;top:222.84px;font-size:10px;line-height:10px;color:#9a9a9a;font-family:'Liberation Mono', monospace;">12</div>
<div class="t m" style="left:413.00px;top:234.84px;font-size:10px;line-height:10px;color:#000;font-family:'Liberation Mono', monospace;">  <span class="id">`Email`</span> <span class="ty">VARCHAR</span>(<span class="n">60</span>) <b>NOT</b> NULL,</div>
<div class="t m" style="left:383.50px;top:234.84px;font-size:10px;line-height:10px;color:#9a9a9a;font-family:'Liberation Mono', monospace;">13</div>
<div class="t m" style="left:413.00px;top:246.84px;font-size:10px;line-height:10px;color:#000;font-family:'Liberation Mono', monospace;">  <span class="id">`SupportRepId`</span> <span class="ty">INT</span> NULL,</div>
<div class="t m" style="left:383.50px;top:246.84px;font-size:10px;line-height:10px;color:#9a9a9a;font-family:'Liberation Mono', monospace;">14</div>
<div class="t m" style="left:413.00px;top:258.84px;font-size:10px;line-height:10px;color:#000;font-family:'Liberation Mono', monospace;">  <b>CONSTRAINT</b> <span class="id">`PRIMARY`</span> <b>PRIMARY</b> <b>KEY</b> (<span class="id">`CustomerId`</span>),</div>
<div class="t m" style="left:383.50px;top:258.84px;font-size:10px;line-height:10px;color:#9a9a9a;font-family:'Liberation Mono', monospace;">15</div>
<div class="t m" style="left:413.00px;top:270.84px;font-size:10px;line-height:10px;color:#000;font-family:'Liberation Mono', monospace;">  <b>CONSTRAINT</b> <span class="id">`FK_CustomerSupportRepId`</span> <b>FOREIGN</b> <b>KEY</b> (<span class="id">`SupportRepId`</span>) <b>REFERENCES</b> <span class="id">`Employee`</span> (<span class="id">`EmployeeId`</span>) <b>ON</b> <b>DELETE</b> <b>NO</b> <b>ACTION</b> <b>ON</b> <b>UPDATE</b> <b>NO</b> <b>ACTION</b></div>
<div class="t m" style="left:383.50px;top:270.84px;font-size:10px;line-height:10px;color:#9a9a9a;font-family:'Liberation Mono', monospace;">16</div>
<div class="t m" style="left:413.00px;top:282.84px;font-size:10px;line-height:10px;color:#000;font-family:'Liberation Mono', monospace;">);</div>
<div class="t m" style="left:383.50px;top:282.84px;font-size:10px;line-height:10px;color:#9a9a9a;font-family:'Liberation Mono', monospace;">17</div>
<div class="t m" style="left:413.00px;top:294.84px;font-size:10px;line-height:10px;color:#000;font-family:'Liberation Mono', monospace;"><b>CREATE</b> <b>INDEX</b> <span class="id">`IFK_CustomerSupportRepId`</span></div>
<div class="t m" style="left:383.50px;top:294.84px;font-size:10px;line-height:10px;color:#9a9a9a;font-family:'Liberation Mono', monospace;">18</div>
<div class="t m" style="left:413.00px;top:306.84px;font-size:10px;line-height:10px;color:#000;font-family:'Liberation Mono', monospace;"><b>ON</b> <span class="id">`Customer`</span> (</div>
<div class="t m" style="left:383.50px;top:306.84px;font-size:10px;line-height:10px;color:#9a9a9a;font-family:'Liberation Mono', monospace;">19</div>
<div class="t m" style="left:413.00px;top:318.84px;font-size:10px;line-height:10px;color:#000;font-family:'Liberation Mono', monospace;">  <span class="id">`SupportRepId`</span> <b>ASC</b></div>
<div class="t m" style="left:383.50px;top:318.84px;font-size:10px;line-height:10px;color:#9a9a9a;font-family:'Liberation Mono', monospace;">20</div>
<div class="t m" style="left:413.00px;top:330.84px;font-size:10px;line-height:10px;color:#000;font-family:'Liberation Mono', monospace;">);</div>
<div class="t m" style="left:383.50px;top:330.84px;font-size:10px;line-height:10px;color:#9a9a9a;font-family:'Liberation Mono', monospace;">21</div>
<div class="t m" style="left:413.00px;top:342.84px;font-size:10px;line-height:10px;color:#000;font-family:'Liberation Mono', monospace;"></div>
<div class="t m" style="left:383.50px;top:342.84px;font-size:10px;line-height:10px;color:#9a9a9a;font-family:'Liberation Mono', monospace;">22</div>
<div class="t m" style="left:413.00px;top:354.84px;font-size:10px;line-height:10px;color:#000;font-family:'Liberation Mono', monospace;"><b>select</b> <span class="op">*</span> <b>from</b> </div>
<div class="t m" style="left:383.50px;top:354.84px;font-size:10px;line-height:10px;color:#9a9a9a;font-family:'Liberation Mono', monospace;">23</div>
<div class="r" style="left:497px;top:353px;width:2px;height:11px;background:#000;"></div>
<div class="r" style="left:492px;top:365px;width:301.5px;height:129.5px;background:#fff;border:1px solid #d4d4d4;box-sizing:border-box;box-shadow:1px 2px 4px rgba(0,0,0,0.25);"></div>
<div class="r" style="left:493px;top:365.5px;width:285px;height:16.0px;background:#c7d1f4;"></div>
<div class="t m" style="left:497.00px;top:370.34px;font-size:10px;line-height:10px;color:#2a2a2a;font-family:'Liberation Mono', monospace;-webkit-text-stroke:0;">Album</div>
<div class="t m" style="left:538.00px;top:370.34px;font-size:10px;line-height:10px;color:#909090;font-family:'Liberation Mono', monospace;-webkit-text-stroke:0;">table</div>
<div class="t m" style="left:497.00px;top:386.34px;font-size:10px;line-height:10px;color:#2a2a2a;font-family:'Liberation Mono', monospace;-webkit-text-stroke:0;">Artist</div>
<div class="t m" style="left:544.00px;top:386.34px;font-size:10px;line-height:10px;color:#909090;font-family:'Liberation Mono', monospace;-webkit-text-stroke:0;">table</div>
<div class="t m" style="left:497.00px;top:402.34px;font-size:10px;line-height:10px;color:#2a2a2a;font-family:'Liberation Mono', monospace;-webkit-text-stroke:0;">Customer</div>
<div class="t m" style="left:556.00px;top:402.34px;font-size:10px;line-height:10px;color:#909090;font-family:'Liberation Mono', monospace;-webkit-text-stroke:0;">table</div>
<div class="t m" style="left:497.00px;top:418.34px;font-size:10px;line-height:10px;color:#2a2a2a;font-family:'Liberation Mono', monospace;-webkit-text-stroke:0;">Employee</div>
<div class="t m" style="left:556.00px;top:418.34px;font-size:10px;line-height:10px;color:#909090;font-family:'Liberation Mono', monospace;-webkit-text-stroke:0;">table</div>
<div class="t m" style="left:497.00px;top:434.34px;font-size:10px;line-height:10px;color:#2a2a2a;font-family:'Liberation Mono', monospace;-webkit-text-stroke:0;">Genre</div>
<div class="t m" style="left:538.00px;top:434.34px;font-size:10px;line-height:10px;color:#909090;font-family:'Liberation Mono', monospace;-webkit-text-stroke:0;">table</div>
<div class="t m" style="left:497.00px;top:450.34px;font-size:10px;line-height:10px;color:#2a2a2a;font-family:'Liberation Mono', monospace;-webkit-text-stroke:0;">Invoice</div>
<div class="t m" style="left:550.00px;top:450.34px;font-size:10px;line-height:10px;color:#909090;font-family:'Liberation Mono', monospace;-webkit-text-stroke:0;">table</div>
<div class="t m" style="left:497.00px;top:466.34px;font-size:10px;line-height:10px;color:#2a2a2a;font-family:'Liberation Mono', monospace;-webkit-text-stroke:0;">InvoiceLine</div>
<div class="t m" style="left:574.00px;top:466.34px;font-size:10px;line-height:10px;color:#909090;font-family:'Liberation Mono', monospace;-webkit-text-stroke:0;">table</div>
<div class="t m" style="left:497.00px;top:482.34px;font-size:10px;line-height:10px;color:#2a2a2a;font-family:'Liberation Mono', monospace;-webkit-text-stroke:0;">MediaType</div>
<div class="t m" style="left:562.00px;top:482.34px;font-size:10px;line-height:10px;color:#909090;font-family:'Liberation Mono', monospace;-webkit-text-stroke:0;">table</div>
<div class="r" style="left:364px;top:768px;width:939px;height:1px;background:#d0d0d0;"></div>
<div class="r" style="left:364px;top:769px;width:939px;height:28px;background:#ececec;"></div>
<div class="r" style="left:369.1px;top:772px;width:110.5px;height:21.5px;background:#d7d7d7;border-radius:4px;"></div>
<div class="r" style="left:490.2px;top:772px;width:57.69999999999999px;height:21.5px;background:#d7d7d7;border-radius:4px;"></div>
<div class="r" style="left:558.3px;top:772px;width:88.70000000000005px;height:21.5px;background:#d7d7d7;border-radius:4px;"></div>
<div class="r" style="left:657px;top:772px;width:101px;height:21.5px;background:#d7d7d7;border-radius:4px;"></div>
<div class="r" style="left:452px;top:772px;width:1px;height:21.5px;background:#8c8c8c;"></div>
<div class="r" style="left:619.5px;top:772px;width:1.0px;height:21.5px;background:#8c8c8c;"></div>
<svg class="i" style="left:381.4px;top:778.4px;" width="6.60" height="8.20" viewBox="8 5.14 11 14.0" preserveAspectRatio="none"><path d="M8,5.14V19.14L19,12.14L8,5.14Z" fill="#1a0d9c"/></svg>
<div class="t" style="left:395.80px;top:775.75px;font-size:14px;line-height:14px;color:#222;letter-spacing:-0.133px;">Execute</div>
<svg class="i" style="left:461.2px;top:780.7px;overflow:visible" width="6.90" height="4.10" viewBox="0 0 10 5" preserveAspectRatio="none"><path d="M0.8,0.8L5,4.2L9.2,0.8" stroke="#1a0d9c" stroke-width="1.2" fill="none" vector-effect="non-scaling-stroke"/></svg>
<svg class="i" style="left:500.4px;top:778.8px" width="8.60" height="8.10" viewBox="0 0 10 10" preserveAspectRatio="none"><path d="M0.5,0.5L9.5,9.5M9.5,0.5L0.5,9.5" stroke="#9c9c9c" stroke-width="1.2" fill="none"/></svg>
<div class="t" style="left:519.60px;top:775.75px;font-size:14px;line-height:14px;color:#a3a3a3;letter-spacing:0.280px;">Kill</div>
<svg class="i" style="left:567.6px;top:777.9px;" width="10.80" height="10.40" viewBox="3 3 18 18" preserveAspectRatio="none"><path d="M15,9H5V5H15M12,19A3,3 0 0,1 9,16A3,3 0 0,1 12,13A3,3 0 0,1 15,16A3,3 0 0,1 12,19M17,3H5C3.89,3 3,3.9 3,5V19A2,2 0 0,0 5,21H19A2,2 0 0,0 21,19V7L17,3Z" fill="#1a0d9c"/></svg>
<div class="t" style="left:585.70px;top:775.75px;font-size:14px;line-height:14px;color:#222;letter-spacing:-1.475px;">Save</div>
<svg class="i" style="left:628.7px;top:781px;overflow:visible" width="7.20" height="4.30" viewBox="0 0 10 5" preserveAspectRatio="none"><path d="M0.8,0.8L5,4.2L9.2,0.8" stroke="#1a0d9c" stroke-width="1.2" fill="none" vector-effect="non-scaling-stroke"/></svg>
<div class="t" style="left:669.60px;top:775.75px;font-size:14px;line-height:14px;color:#222;letter-spacing:0.060px;">Format code</div>
<div class="r" style="left:61px;top:796px;width:1242px;height:1px;background:#d8f4f4;"></div>
<div class="r" style="left:0px;top:797px;width:1303px;height:22px;background:#176462;"></div>
<div class="r" style="left:0px;top:797px;width:1px;height:22px;background:#9fd8d4;"></div>
<svg class="i" style="left:13px;top:802px;" width="10.20" height="11.00" viewBox="4 3 16 18" preserveAspectRatio="none"><path d="M12,3C7.58,3 4,4.79 4,7C4,9.21 7.58,11 12,11C16.42,11 20,9.21 20,7C20,4.79 16.42,3 12,3M4,9V12C4,14.21 7.58,16 12,16C16.42,16 20,14.21 20,12V9C20,11.21 16.42,13 12,13C7.58,13 4,11.21 4,9M4,14V17C4,19.21 7.58,21 12,21C16.42,21 20,19.21 20,17V14C20,16.21 16.42,18 12,18C7.58,18 4,16.21 4,14Z" fill="#dff3f0"/></svg>
<div class="t" style="left:29.70px;top:801.15px;font-size:14px;line-height:14px;color:#dff3f0;letter-spacing:-0.211px;">Chinook</div>
<div class="r" style="left:101px;top:800px;width:20px;height:16px;background:#3fcac3;border-radius:3px;"></div>
<svg class="i" style="left:105.8px;top:803px;" width="10.20" height="9.80" viewBox="3 3 18 18" preserveAspectRatio="none"><path d="M17.5,12A1.5,1.5 0 0,1 16,10.5A1.5,1.5 0 0,1 17.5,9A1.5,1.5 0 0,1 19,10.5A1.5,1.5 0 0,1 17.5,12M14.5,8A1.5,1.5 0 0,1 13,6.5A1.5,1.5 0 0,1 14.5,5A1.5,1.5 0 0,1 16,6.5A1.5,1.5 0 0,1 14.5,8M9.5,8A1.5,1.5 0 0,1 8,6.5A1.5,1.5 0 0,1 9.5,5A1.5,1.5 0 0,1 11,6.5A1.5,1.5 0 0,1 9.5,8M6.5,12A1.5,1.5 0 0,1 5,10.5A1.5,1.5 0 0,1 6.5,9A1.5,1.5 0 0,1 8,10.5A1.5,1.5 0 0,1 6.5,12M12,3A9,9 0 0,0 3,12A9,9 0 0,0 12,21A1.5,1.5 0 0,0 13.5,19.5C13.5,19.11 13.35,18.76 13.11,18.5C12.88,18.23 12.73,17.88 12.73,17.5A1.5,1.5 0 0,1 14.23,16H16A5,5 0 0,0 21,11C21,6.58 16.97,3 12,3Z" fill="#111"/></svg>
<svg class="i" style="left:143px;top:801.8px;" width="10.50" height="12.20" viewBox="3 1 18 22" preserveAspectRatio="none"><path d="M4,1H20A1,1 0 0,1 21,2V6A1,1 0 0,1 20,7H4A1,1 0 0,1 3,6V2A1,1 0 0,1 4,1M4,9H20A1,1 0 0,1 21,10V14A1,1 0 0,1 20,15H4A1,1 0 0,1 3,14V10A1,1 0 0,1 4,9M4,17H20A1,1 0 0,1 21,18V22A1,1 0 0,1 20,23H4A1,1 0 0,1 3,22V18A1,1 0 0,1 4,17M9,5H10V3H9V5M9,13H10V11H9V13M9,21H10V19H9V21M5,3V5H7V3H5M5,11V13H7V11H5M5,19V21H7V19H5Z" fill="#dff3f0"/></svg>
<div class="t" style="left:158.50px;top:801.15px;font-size:14px;line-height:14px;color:#dff3f0;letter-spacing:-0.242px;">MySQL Local</div>
<div class="r" style="left:260px;top:800px;width:20px;height:16px;background:#a8e04c;border-radius:3px;"></div>
<svg class="i" style="left:264.9px;top:803px;" width="10.40" height="9.80" viewBox="3 3 18 18" preserveAspectRatio="none"><path d="M17.5,12A1.5,1.5 0 0,1 16,10.5A1.5,1.5 0 0,1 17.5,9A1.5,1.5 0 0,1 19,10.5A1.5,1.5 0 0,1 17.5,12M14.5,8A1.5,1.5 0 0,1 13,6.5A1.5,1.5 0 0,1 14.5,5A1.5,1.5 0 0,1 16,6.5A1.5,1.5 0 0,1 14.5,8M9.5,8A1.5,1.5 0 0,1 8,6.5A1.5,1.5 0 0,1 9.5,5A1.5,1.5 0 0,1 11,6.5A1.5,1.5 0 0,1 9.5,8M6.5,12A1.5,1.5 0 0,1 5,10.5A1.5,1.5 0 0,1 6.5,9A1.5,1.5 0 0,1 8,10.5A1.5,1.5 0 0,1 6.5,12M12,3A9,9 0 0,0 3,12A9,9 0 0,0 12,21A1.5,1.5 0 0,0 13.5,19.5C13.5,19.11 13.35,18.76 13.11,18.5C12.88,18.23 12.73,17.88 12.73,17.5A1.5,1.5 0 0,1 14.23,16H16A5,5 0 0,0 21,11C21,6.58 16.97,3 12,3Z" fill="#111"/></svg>
<svg class="i" style="left:301.5px;top:802.5px;" width="10.50" height="10.00" viewBox="4 4 16 16" preserveAspectRatio="none"><path d="M12,4A4,4 0 0,1 16,8A4,4 0 0,1 12,12A4,4 0 0,1 8,8A4,4 0 0,1 12,4M12,14C16.42,14 20,15.79 20,18V20H4V18C4,15.79 7.58,14 12,14Z" fill="#dff3f0"/></svg>
<div class="t" style="left:318.00px;top:801.15px;font-size:14px;line-height:14px;color:#dff3f0;letter-spacing:0.922px;">root</div>
<svg class="i" style="left:366.9px;top:801.8px;" width="11.90" height="12.00" viewBox="2 2 20 20" preserveAspectRatio="none"><path d="M12 2C6.5 2 2 6.5 2 12S6.5 22 12 22 22 17.5 22 12 17.5 2 12 2M10 17L5 12L6.41 10.59L10 14.17L17.59 6.58L19 8L10 17Z" fill="#82da6e"/></svg>
<div class="t" style="left:384.60px;top:801.15px;font-size:14px;line-height:14px;color:#dff3f0;letter-spacing:0.021px;">Connected</div>
<svg class="i" style="left:473px;top:802.5px;" width="12.20" height="10.00" viewBox="2 4 20 16" preserveAspectRatio="none"><path d="M22,10V6C22,4.89 21.1,4 20,4H4A2,2 0 0,0 2,6V10C3.11,10 4,10.9 4,12A2,2 0 0,1 2,14V18A2,2 0 0,0 4,20H20A2,2 0 0,0 22,18V14A2,2 0 0,1 20,12A2,2 0 0,1 22,10M13,17.5H11V15.5H13V17.5M13,13H11V11H13V13M13,8.5H11V6.5H13V8.5Z" fill="#dff3f0"/></svg>
<div class="t" style="left:489.50px;top:801.15px;font-size:14px;line-height:14px;color:#dff3f0;letter-spacing:-0.255px;">MySQL 8.0.20</div>
<svg class="i" style="left:597.9px;top:802px;" width="12.10" height="11.00" viewBox="1 3 21 18" preserveAspectRatio="none"><path d="M13.5,8H12V13L16.28,15.54L17,14.33L13.5,12.25V8M13,3A9,9 0 0,0 4,12H1L4.96,16.03L9,12H6A7,7 0 0,1 13,5A7,7 0 0,1 20,12A7,7 0 0,1 13,19C11.07,19 9.32,18.21 8.06,16.94L6.64,18.36C8.27,20 10.5,21 13,21A9,9 0 0,0 22,12A9,9 0 0,0 13,3" fill="#dff3f0"/></svg>
<div class="t" style="left:619.40px;top:801.15px;font-size:14px;line-height:14px;color:#dff3f0;letter-spacing:-0.005px;">7 minutes ago</div>
</body></html>
